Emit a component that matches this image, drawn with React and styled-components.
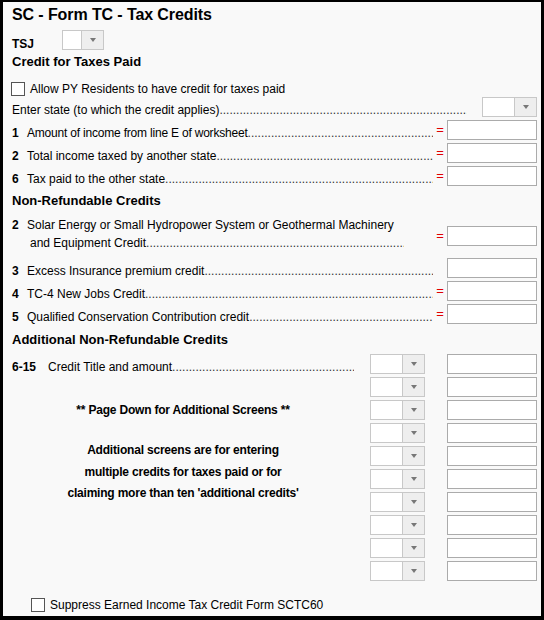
import styled, { createGlobalStyle } from "styled-components";

const GlobalStyle = createGlobalStyle`
  html, body {
    margin: 0;
    padding: 0;
    background: #000;
  }
  body {
    font-family: "Liberation Sans", Arial, sans-serif;
    font-size: 12px;
    color: #000;
  }
`;

const DOTS = ".".repeat(120);

export default function App() {
  return (
    <>
      <GlobalStyle />
      <Frame>
        <Title>SC - Form TC - Tax Credits</Title>
        <TsjRow>
          <TsjLabel>TSJ</TsjLabel>
          <Select $w={42} />
        </TsjRow>
        <Section $mt={4}>Credit for Taxes Paid</Section>
        <CheckRow $mt={10}>
          <Box />
          <span>Allow PY Residents to have credit for taxes paid</span>
        </CheckRow>
        <Field $mt={0}>
          <Label>
            <span>Enter state (to which the credit applies)</span>
            <Dots />
          </Label>
          <Select $w={55} $ml={15} />
        </Field>
        <Field>
          <Label>
            <Num>1</Num>
            <Tight>Amount of income from line E of worksheet</Tight>
            <Dots />
          </Label>
          <Eq>=</Eq>
          <Input />
        </Field>
        <Field>
          <Label>
            <Num>2</Num>
            <span>Total income taxed by another state</span>
            <Dots />
          </Label>
          <Eq>=</Eq>
          <Input />
        </Field>
        <Field>
          <Label>
            <Num>6</Num>
            <span>Tax paid to the other state</span>
            <Dots />
          </Label>
          <Eq>=</Eq>
          <Input />
        </Field>

        <Section $mt={7}>Non-Refundable Credits</Section>
        <TallField>
          <TallLabel>
            <Line>
              <Num>2</Num>
              <span>Solar Energy or Small Hydropower System or Geothermal Machinery</span>
            </Line>
            <Line $pr={29}>
              <Indent>and Equipment Credit</Indent>
              <Dots />
            </Line>
          </TallLabel>
          <EqBox>
            <Eq>=</Eq>
            <Input />
          </EqBox>
        </TallField>
        <Field $mt={6}>
          <Label>
            <Num>3</Num>
            <span>Excess Insurance premium credit</span>
            <Dots />
          </Label>
          <Eq />
          <Input />
        </Field>
        <Field>
          <Label>
            <Num>4</Num>
            <span>TC-4 New Jobs Credit</span>
            <Dots />
          </Label>
          <Eq>=</Eq>
          <Input />
        </Field>
        <Field>
          <Label>
            <Num>5</Num>
            <span>Qualified Conservation Contribution credit</span>
            <Dots />
          </Label>
          <Eq>=</Eq>
          <Input />
        </Field>

        <Section $mt={8}>Additional Non-Refundable Credits</Section>
        <Additional>
          <Notes>
            <Label as="div">
              <Num $w={36}>6-15</Num>
              <span>Credit Title and amount</span>
              <Dots />
            </Label>
            <Note $mt={29}>** Page Down for Additional Screens **</Note>
            <Note $mt={23} $lh={21.5}>
              Additional screens are for entering
              <br />
              multiple credits for taxes paid or for
              <br />
              claiming more than ten 'additional credits'
            </Note>
          </Notes>
          <Pairs>
            {Array.from({ length: 10 }).map((_, i) => (
              <Pair key={i}>
                <Select $w={55} />
                <Input />
              </Pair>
            ))}
          </Pairs>
        </Additional>

        <CheckRow $mt={15} $pl={20}>
          <Box />
          <span>Suppress Earned Income Tax Credit Form SCTC60</span>
        </CheckRow>
      </Frame>
    </>
  );
}

function Select({ $w, $ml }) {
  return (
    <SelectBox $w={$w} $ml={$ml}>
      <SelectField />
      <SelectButton>
        <Arrow />
      </SelectButton>
    </SelectBox>
  );
}

function Dots() {
  return <DotFill>{DOTS}</DotFill>;
}

const Frame = styled.div`
  box-sizing: border-box;
  width: 544px;
  height: 620px;
  border-style: solid;
  border-color: #000;
  border-width: 2px 3px 4px 3px;
  background: #f9f9f9;
  padding: 3px 4px 0 9px;
  overflow: hidden;
`;

const Title = styled.div`
  font-size: 16px;
  font-weight: bold;
  line-height: 20px;
  height: 20px;
  letter-spacing: -0.1px;
`;

const TsjRow = styled.div`
  display: flex;
  align-items: flex-start;
  margin-top: 5px;
  height: 20px;
`;

const TsjLabel = styled.b`
  width: 50px;
  line-height: 14px;
  margin-top: 7px;
`;

const Section = styled.div`
  font-size: 13px;
  font-weight: bold;
  line-height: 16px;
  height: 16px;
  margin-top: ${(p) => p.$mt}px;
`;

const CheckRow = styled.div`
  display: flex;
  align-items: center;
  gap: 5px;
  height: 17px;
  margin-top: ${(p) => p.$mt}px;
  padding-left: ${(p) => p.$pl || 0}px;
  margin-left: -1px;
  white-space: nowrap;
`;

const Box = styled.span`
  box-sizing: border-box;
  width: 14px;
  height: 14px;
  border: 1px solid #555;
  background: #fff;
  flex-shrink: 0;
`;

const Field = styled.div`
  display: flex;
  align-items: flex-start;
  height: 20px;
  margin-top: ${(p) => (p.$mt ?? 3)}px;
`;

const Label = styled.div`
  flex: 1;
  min-width: 0;
  display: flex;
  padding-top: 6px;
  line-height: 14px;
  white-space: nowrap;
`;

const Tight = styled.span`
  letter-spacing: -0.2px;
`;

const Num = styled.b`
  width: ${(p) => p.$w || 15}px;
  flex-shrink: 0;
`;

const DotFill = styled.span`
  flex: 1;
  min-width: 0;
  overflow: hidden;
  white-space: nowrap;
  color: #333;
`;

const Eq = styled.span`
  width: 14px;
  flex-shrink: 0;
  text-align: center;
  line-height: 20px;
  color: #e00000;
  font-size: 13px;
`;

const Input = styled.div`
  box-sizing: border-box;
  width: 90px;
  height: 20px;
  flex-shrink: 0;
  border: 1px solid #ababab;
  background: #fff;
`;

const TallField = styled.div`
  display: flex;
  align-items: flex-start;
  margin-top: 7px;
  height: 36px;
`;

const TallLabel = styled.div`
  flex: 1;
  min-width: 0;
`;

const Line = styled.div`
  display: flex;
  line-height: 18px;
  white-space: nowrap;
  padding-right: ${(p) => p.$pr || 0}px;
`;

const Indent = styled.span`
  padding-left: 18px;
`;

const EqBox = styled.div`
  display: flex;
  margin-top: 10px;
`;

const Additional = styled.div`
  display: flex;
  margin-top: 6px;
`;

const Notes = styled.div`
  width: 342px;
  padding-right: 16px;
`;

const Note = styled.div`
  margin-top: ${(p) => p.$mt}px;
  line-height: ${(p) => p.$lh || 14}px;
  font-weight: bold;
  text-align: center;
  white-space: nowrap;
  letter-spacing: -0.2px;
`;

const Pairs = styled.div`
  display: flex;
  flex-direction: column;
  gap: 3px;
`;

const Pair = styled.div`
  display: flex;
  gap: 22px;
`;

const SelectBox = styled.div`
  box-sizing: border-box;
  display: flex;
  width: ${(p) => p.$w}px;
  height: 20px;
  flex-shrink: 0;
  margin-left: ${(p) => p.$ml || 0}px;
  border: 1px solid #c8c8c8;
  background: #fff;
`;

const SelectField = styled.div`
  flex: 1;
`;

const SelectButton = styled.div`
  width: 21px;
  display: flex;
  align-items: center;
  justify-content: center;
  background: #eeeeee;
  border-left: 1px solid #c8c8c8;
`;

const Arrow = styled.span`
  width: 0;
  height: 0;
  border-left: 3.5px solid transparent;
  border-right: 3.5px solid transparent;
  border-top: 4px solid #777;
`;
